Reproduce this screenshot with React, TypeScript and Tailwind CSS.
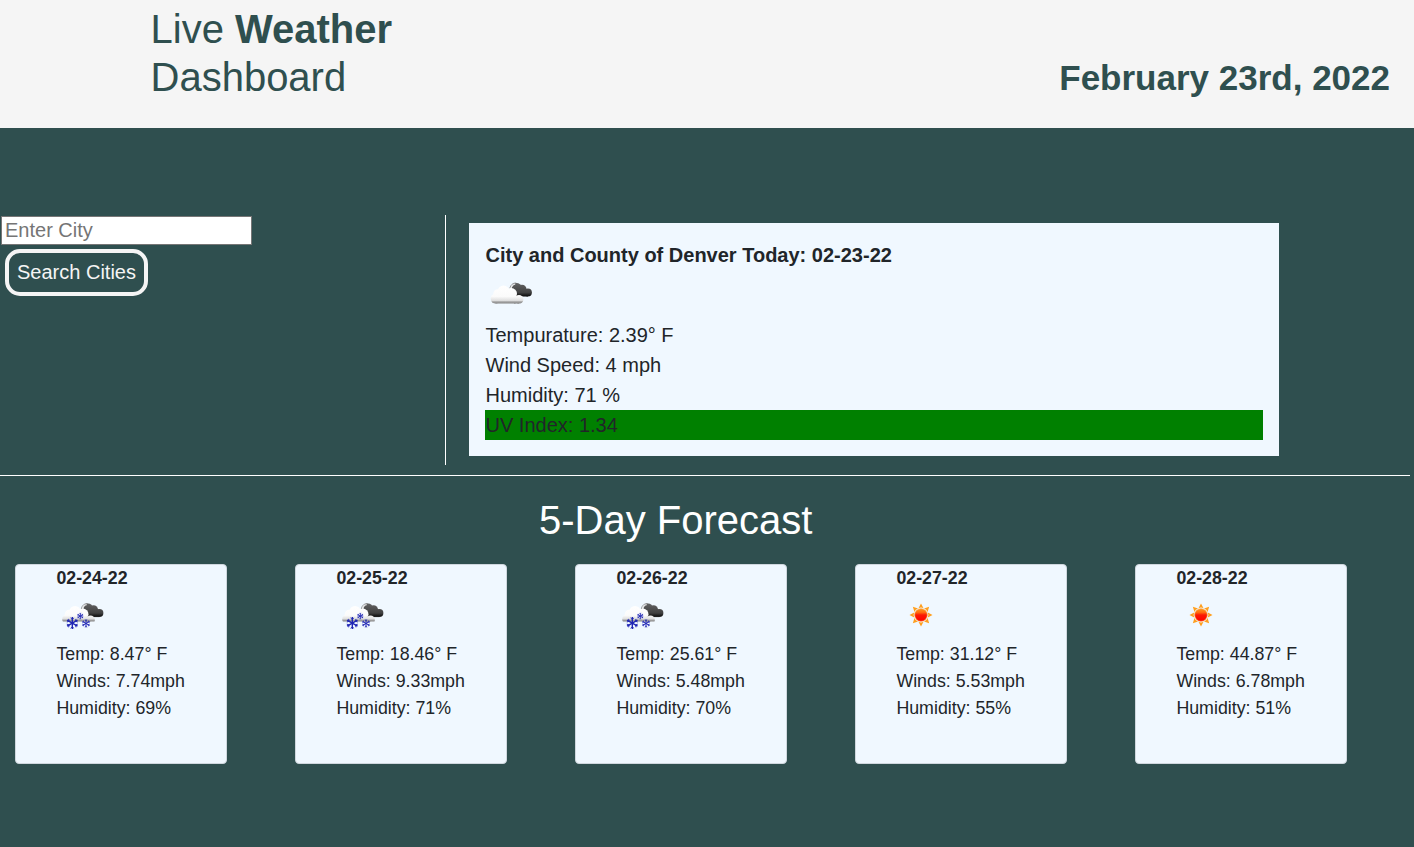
import React from 'react';

type IconKind = 'clouds' | 'snow' | 'sun';

const forecast: { date: string; icon: IconKind; temp: string; wind: string; humidity: string }[] = [
  { date: '02-24-22', icon: 'snow', temp: '8.47', wind: '7.74', humidity: '69' },
  { date: '02-25-22', icon: 'snow', temp: '18.46', wind: '9.33', humidity: '71' },
  { date: '02-26-22', icon: 'snow', temp: '25.61', wind: '5.48', humidity: '70' },
  { date: '02-27-22', icon: 'sun', temp: '31.12', wind: '5.53', humidity: '55' },
  { date: '02-28-22', icon: 'sun', temp: '44.87', wind: '6.78', humidity: '51' },
];

function Flake({ x, y, r, w }: { x: number; y: number; r: number; w: number }) {
  return (
    <g transform={`translate(${x} ${y})`} stroke="#2026b4" fill="none">
      {[0, 60, 120, 180, 240, 300].map((a) => (
        <g key={a} transform={`rotate(${a})`}>
          <path d={`M0 0V${-r}`} strokeWidth={w} />
          <path d={`M${-r * 0.3} ${-r * 0.88}L0 ${-r * 0.62}L${r * 0.3} ${-r * 0.88}`} strokeWidth={w * 0.6} />
        </g>
      ))}
    </g>
  );
}

function WeatherIcon({ kind, id }: { kind: IconKind; id: string }) {
  if (kind === 'sun') {
    return (
      <svg width="50" height="50" viewBox="0 0.5 50 50" className="block">
        <defs>
          <linearGradient id={`${id}-core`} x1="0" y1="0" x2="0" y2="1">
            <stop offset="0" stopColor="#ff9a1c" />
            <stop offset="0.3" stopColor="#ff6a10" />
            <stop offset="0.5" stopColor="#fb1a04" />
            <stop offset="1" stopColor="#ff0000" />
          </linearGradient>
        </defs>
        <g fill="#ff9f1e">
          {[0, 45, 90, 135, 180, 225, 270, 315].map((a) => (
            <path key={a} transform={`translate(25 24.5) rotate(${a})`} d="M0 -11.5L2.5 -6.8Q0 -8 -2.5 -6.8Z" />
          ))}
        </g>
        <circle cx="25" cy="24.5" r="6.3" fill={`url(#${id}-core)`} stroke="#ffa238" strokeWidth="0.6" />
      </svg>
    );
  }
  const snowy = kind === 'snow';
  return (
    <svg width="50" height="50" viewBox={snowy ? '-0.5 0.5 50 50' : '0 0 50 50'} className="block">
      <defs>
        <linearGradient id={`${id}-white`} gradientUnits="userSpaceOnUse" x1="0" y1="15" x2="0" y2={snowy ? '31.5' : '34'}>
          <stop offset="0" stopColor="#ffffff" />
          <stop offset="0.6" stopColor="#fbfbfb" />
          <stop offset="0.82" stopColor="#dedede" />
          <stop offset="0.88" stopColor="#a6a6a6" />
          <stop offset="1" stopColor="#7c7c7c" />
        </linearGradient>
        <linearGradient id={`${id}-dark`} gradientUnits="userSpaceOnUse" x1="0" y1="12" x2="0" y2="27">
          <stop offset="0" stopColor="#666666" />
          <stop offset="0.7" stopColor="#414141" />
          <stop offset="0.9" stopColor="#161616" />
          <stop offset="1" stopColor="#333333" />
        </linearGradient>
        <clipPath id={`${id}-base`}>
          <rect x="0" y="0" width="50" height={snowy ? 31 : 33.7} />
        </clipPath>
      </defs>
      <g fill={`url(#${id}-dark)`}>
        <circle cx="31.6" cy="17.6" r="4.7" />
        <circle cx="37" cy="19.2" r="4.5" />
        <circle cx="42.9" cy="22.6" r="4" />
        <rect x="29" y="19" width="14" height="7.6" />
      </g>
      <path d="M24.8 18.5Q26 12.9 31.2 13" fill="none" stroke="#777777" strokeWidth="0.8" />
      <path d="M25.8 18.8Q27 14.5 30.2 14.2" fill="none" stroke="#e8e8e8" strokeWidth="1.3" />
      <g fill={`url(#${id}-white)`} clipPath={`url(#${id}-base)`}>
        <circle cx="10.6" cy="28.8" r="4.9" />
        <circle cx="12.8" cy="23.8" r="4.5" />
        <circle cx="18.5" cy="21" r="5.6" />
        <circle cx="26.3" cy="23.8" r="5.7" />
        <circle cx="34" cy="29.4" r="4.4" />
        <rect x="10.6" y="22" width="20" height="11.7" />
        <rect x="29" y="27" width="5" height="6.7" />
      </g>
      {snowy && (
        <>
          <Flake x={15.8} y={32.6} r={6} w={1.4} />
          <Flake x={23.8} y={25.6} r={3.2} w={0.85} />
          <Flake x={29.5} y={32.9} r={4.1} w={1} />
        </>
      )}
    </svg>
  );
}

export default function App() {
  return (
    <div className="flex h-[847px] flex-col overflow-hidden bg-[#2f4f4f] font-['Liberation_Sans',Arial,sans-serif] text-[#212529]">
      <header className="flex h-32 shrink-0 items-start justify-between bg-[#f5f5f5] pl-[150.5px] pr-6 text-[#2f4f4f]">
        <h1 className="pt-[5px] text-[40px] leading-[48px]">
          Live <strong className="font-bold">Weather</strong>
          <br />
          Dashboard
        </h1>
        <p className="pt-[57px] text-[35px] font-bold leading-[42px]">February 23rd, 2022</p>
      </header>

      <section className="mt-[87px] flex h-[250px] shrink-0">
        <div className="flex w-[446px] flex-col items-start border-r border-white pl-px pt-px">
          <input
            type="text"
            placeholder="Enter City"
            className="h-[29px] w-[251px] border border-[#767676] bg-white px-[3px] pb-[2px] text-[20px] placeholder:text-[#757575] placeholder:opacity-100"
          />
          <button className="ml-1 mt-1 h-[47px] w-[143px] whitespace-nowrap rounded-[15px] border-4 border-[#f5f5f5] pb-[2px] text-center text-[20px] leading-[30px] text-[#f5f5f5]">
            Search Cities
          </button>
        </div>
        <div className="ml-[23px] mt-2 h-[233px] w-[810px] bg-[#f0f8ff] p-4 text-[20px] leading-[30px]">
          <h2 className="h-[31px] pl-[0.5px] pt-px font-bold">City and County of Denver Today: 02-23-22</h2>
          <WeatherIcon kind="clouds" id="today" />
          <p className="pl-[0.5px]">Tempurature: 2.39° F</p>
          <p className="pl-[0.5px]">Wind Speed: 4 mph</p>
          <p className="pl-[0.5px]">Humidity: 71 %</p>
          <p className="bg-[#008000] pl-[0.5px]">UV Index: 1.34</p>
        </div>
      </section>

      <div className="mr-1 mt-[10px] h-px shrink-0 bg-white" />

      <h2 className="mt-5 pl-[539px] text-[40px] leading-[48px] text-white">5-Day Forecast</h2>

      <section className="mt-5 flex shrink-0 gap-[68px] pl-[15px]">
        {forecast.map((day) => (
          <article
            key={day.date}
            className="h-[200px] w-[212px] shrink-0 rounded border border-[#cfd7de] bg-[#f0f8ff] pl-[40.4px] text-[17.8px] leading-[27px]"
          >
            <h3 className="h-[26px] font-bold">{day.date}</h3>
            <WeatherIcon kind={day.icon} id={day.date} />
            <p>Temp: {day.temp}° F</p>
            <p>Winds: {day.wind}mph</p>
            <p>Humidity: {day.humidity}%</p>
          </article>
        ))}
      </section>
    </div>
  );
}
